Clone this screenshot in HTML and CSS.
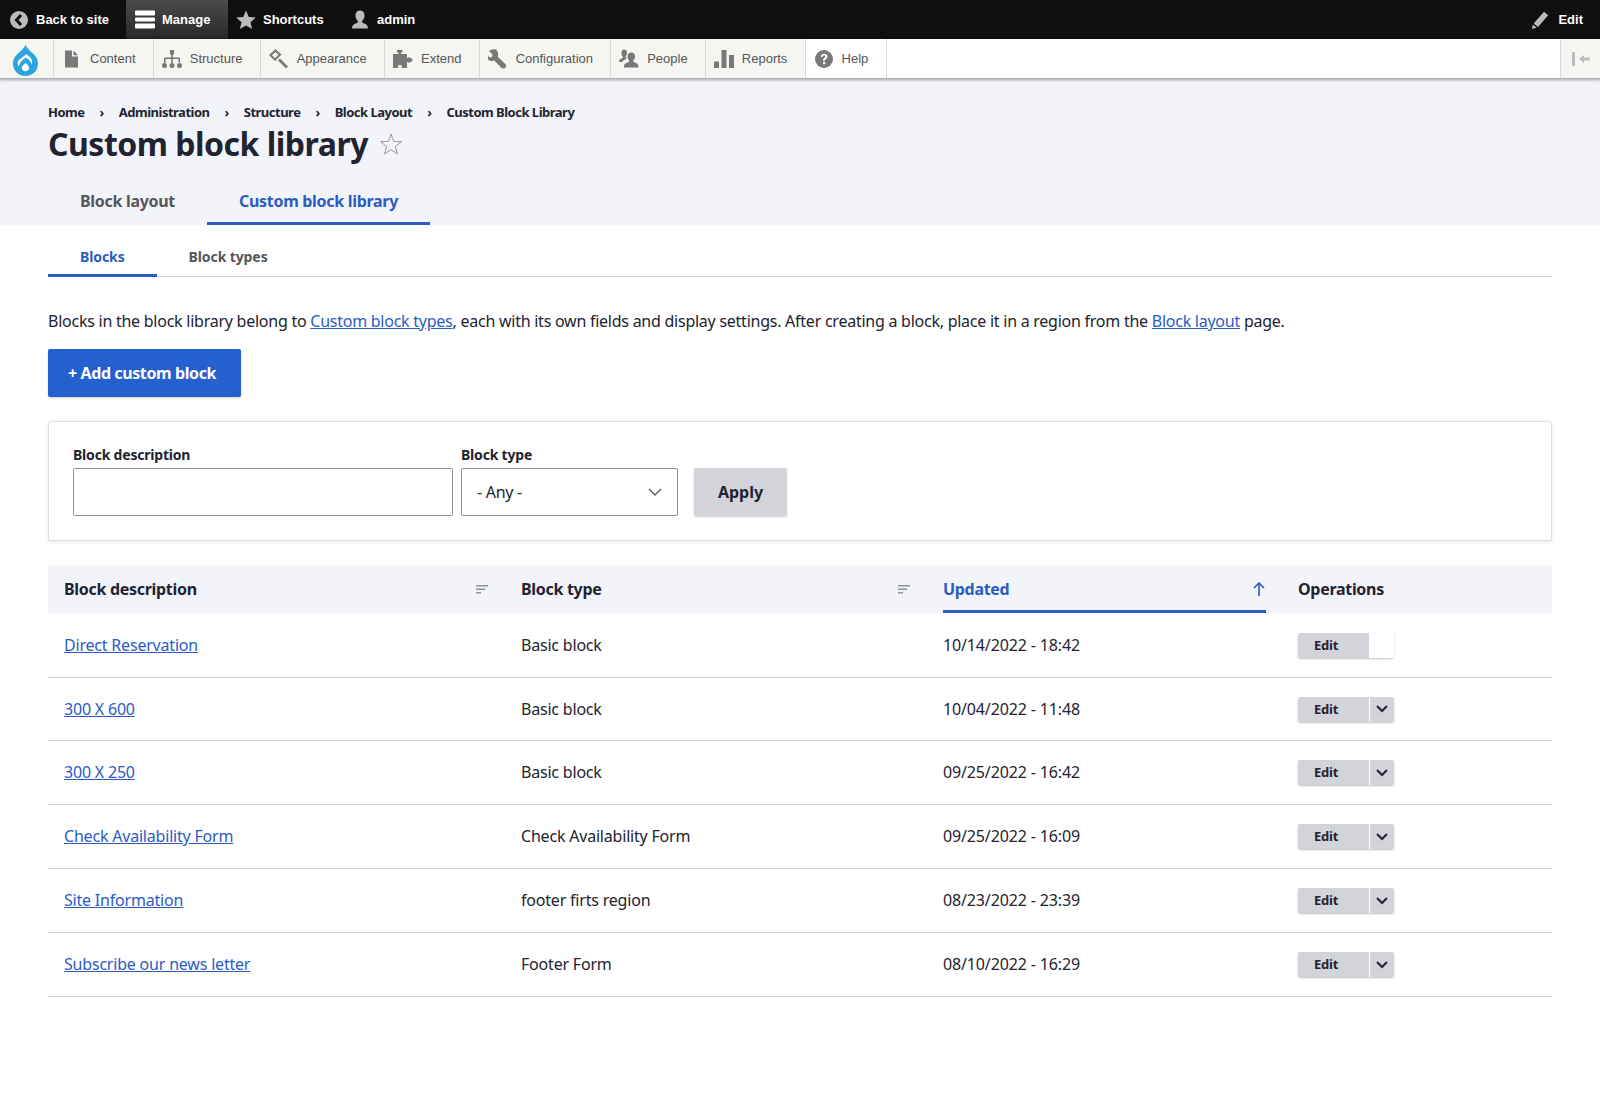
FILE: index.html
```html
<!DOCTYPE html>
<html lang="en">

<head>
    <meta charset="UTF-8">
    <meta name="viewport" content="width=device-width, initial-scale=1.0">
    <title>Custom block library</title>
    <link rel="stylesheet" href="styles.css">
</head>

<body>
    <div class="toolbar-bar">
        <a class="bar-item back">
            <svg width="18" height="18" viewBox="0 0 18 18"><circle cx="9" cy="9" r="9" fill="#bbb"/><path d="M11 4 6.500 9l4.500 5" fill="none" stroke="#0f0f0f" stroke-width="3"/></svg>
            Back to site
        </a>
        <a class="bar-item manage">
            <svg width="20" height="20" viewBox="0 0 20 20"><path d="M0 1.500a1 1 0 0 1 1-1h18a1 1 0 0 1 1 1v3a1 1 0 0 1-1 1H1a1 1 0 0 1-1-1zM0 8.500a1 1 0 0 1 1-1h18a1 1 0 0 1 1 1v2a1 1 0 0 1-1 1H1a1 1 0 0 1-1-1zM0 14.500a1 1 0 0 1 1-1h18a1 1 0 0 1 1 1v3a1 1 0 0 1-1 1H1a1 1 0 0 1-1-1z" fill="#fff"/></svg>
            Manage
        </a>
        <a class="bar-item shortcuts">
            <svg width="20" height="20" viewBox="0 0 20 20"><path d="M10 .5l2.800 6.500 7 .6-5.300 4.600 1.600 6.900-6.100-3.700-6.100 3.700 1.600-6.900L.2 7.600l7-.6z" fill="#bbb"/></svg>
            Shortcuts
        </a>
        <a class="bar-item user">
            <svg width="20" height="20" viewBox="0 0 20 20"><path d="M10 .5c3 0 4.500 2.300 4.500 5 0 2.300-1 4.300-2.300 5.300-.4.400-.4 1.600.4 2 1.500.8 5.400 1.600 5.400 5.700H2c0-4.100 3.900-4.900 5.400-5.700.8-.4.800-1.600.4-2C6.500 9.800 5.500 7.800 5.500 5.500c0-2.700 1.500-5 4.500-5z" fill="#bbb"/></svg>
            admin
        </a>
        <a class="bar-item bar-edit">
            <svg width="18" height="18" viewBox="0 0 18 18"><path d="M13 .8l4.200 3.400L7 16 2.700 12.500zM1.800 13.500l3.900 3.200-4.900 1.200z" fill="#bbb"/></svg>
            Edit
        </a>
    </div>

    <nav class="tray">
        <a class="logo">
            <svg width="25" height="31" viewBox="0 0 25 31"><path d="M12.500 0c1.600 3.800 4.600 5.800 7 8.100 3 2.800 5.500 6 5.500 10.400C25 25.800 19.400 31 12.500 31S0 25.800 0 18.500C0 14.100 2.500 10.900 5.500 8.100 7.900 5.800 10.900 3.800 12.500 0z" fill="#2ba5dd"/><path d="M13.500 9 5.300 15.500c-1 2-.8 4.300.5 6 1-3.800 3.600-7 7.200-9 3 1.800 5 4.200 5.800 7 .9-2.500.2-5.300-1.800-7.200zM12.500 18c2.200 1.600 3.700 3.200 3.700 5.100 0 1.900-1.700 3.100-3.700 3.100s-3.700-1.200-3.700-3.100c0-1.900 1.500-3.500 3.700-5.100z" fill="#fff"/></svg>
        </a>
        <a class="tray-item">
            <svg width="20" height="20" viewBox="-3 -1.500 20 20"><path d="M0 0h7v6h6v11H0zM8.500 0 13 4.800H8.500z" fill="#787878"/></svg>
            Content
        </a>
        <a class="tray-item">
            <svg width="20" height="20" viewBox="0 -1 20 20"><path d="M8 0h4v4.500h-1.200v3H17a1 1 0 0 1 1 1v4h-1.500V9h-5.700v4H9.200V9H3.500v4H2V8.500a1 1 0 0 1 1-1h6.200v-3H8z" fill="#787878"/><circle cx="2.500" cy="15.500" r="2.500" fill="#787878"/><circle cx="10" cy="15.500" r="2.500" fill="#787878"/><circle cx="17.500" cy="15.500" r="2.500" fill="#787878"/></svg>
            Structure
        </a>
        <a class="tray-item">
            <svg width="20" height="20" viewBox="0 0 20 20"><path d="M6.500 0 0 6l6 6 6.500-6.500zM6.500 3 3 6.200l3 3 3.500-3.500z" fill="#787878" fill-rule="evenodd"/><path d="M11 9.500l8 8-2 2-8-8z" fill="#787878"/></svg>
            Appearance
        </a>
        <a class="tray-item">
            <svg width="20" height="20" viewBox="0 -1 20 20"><path d="M0 4h5.500V2.500H4V0h5.500v2.500H8V4h6v4.200c.8-1 3-1.200 3-.2h.500a2 2 0 0 1 0 4H17c0 1-2.200.8-3-.2V18H8.500c1-1 .8-3-1.500-3S4.500 17 5.500 18H0z" fill="#787878"/></svg>
            Extend
        </a>
        <a class="tray-item">
            <svg width="20" height="20" viewBox="0 0 20 20"><path d="M7 .3C5 0 2.500.500 1 2l3.500 3.500L4 8 1.200 8.500-.7 5c-.8 2.500 0 5 1.700 6.300 1.500 1 3.500 1 5-.1l7.300 7.600c1 1 3 1 4-.1s1-2.800 0-3.800L9.800 7.700c.8-2.300.5-4.400-.8-5.900C8.500 1 7.800.6 7 .3z" fill="#787878"/></svg>
            Configuration
        </a>
        <a class="tray-item">
            <svg width="20" height="20" viewBox="0 0 20 20"><path d="M5 .5c2 0 3 1.500 3 3.500 0 1.300-.5 2.500-1.200 3.200-.3.300-.3 1 .2 1.300l1 .5c-1 1.300-2.800 1.700-3.800 2.500-.5.400-.8 1-.9 1.500H0c0-3 2.500-3.500 3.500-4 .5-.3.500-1 .2-1.300C3 7 2.500 5.500 2.500 4 2.500 2 3.300.5 5 .5z" fill="#787878"/><path d="M12.500 3.500c2.500 0 3.500 2 3.500 4 0 1.600-.7 3-1.500 3.800-.3.400-.3 1.300.3 1.600 1.200.6 4.700 1.300 4.700 4.600v1H5v-1c0-3.300 3.500-4 4.700-4.600.6-.3.600-1.200.3-1.600C9.200 10.500 8.500 9.100 8.500 7.500c0-2 1-4 4-4z" fill="#787878"/></svg>
            People
        </a>
        <a class="tray-item">
            <svg width="20" height="20" viewBox="0 -1 20 20"><path d="M0 11.500h5V18H0zM7.500 0h5v18h-5zM15 5h5v13h-5z" fill="#787878"/></svg>
            Reports
        </a>
        <a class="tray-item tray-help">
            <svg width="20" height="20" viewBox="-1 -1 20 20"><circle cx="9" cy="9" r="9" fill="#787878"/><path d="M5.800 6.800C6 4.800 7.300 3.700 9.200 3.700c2 0 3.300 1.200 3.300 2.800 0 2.300-2.500 2.400-2.500 4.300H8c0-3 2.300-3 2.300-4.300 0-.6-.5-1-1.100-1-.8 0-1.200.5-1.300 1.300zM8 12h2.200v2.300H8z" fill="#fff"/></svg>
            Help
        </a>
        <a class="tray-toggle">
            <svg width="18" height="14" viewBox="0 0 18 14"><path d="M0 0h3v14H0zM7 7l5-4v2.500h6v3h-6V11z" fill="#bdbdbd"/></svg>
        </a>
    </nav>

    <header class="page-head">
        <ol class="breadcrumb">
            <li>Home</li>
            <li>Administration</li>
            <li>Structure</li>
            <li>Block Layout</li>
            <li>Custom Block Library</li>
        </ol>
        <div class="title-row">
            <h1>Custom block library</h1>
            <svg class="fav" width="24" height="24" viewBox="0 0 24 24"><path d="M12 2l2.700 7.400 7.800.3-6.200 4.800 2.200 7.500-6.500-4.400-6.500 4.400 2.200-7.500-6.200-4.800 7.800-.3z" fill="none" stroke="#9a9aa2" stroke-width="1"/></svg>
        </div>
        <ul class="primary-tabs">
            <li><a>Block layout</a></li>
            <li class="active"><a>Custom block library</a></li>
        </ul>
    </header>

    <main class="content">
        <ul class="secondary-tabs">
            <li class="active"><a>Blocks</a></li>
            <li><a>Block types</a></li>
        </ul>

        <p class="intro">Blocks in the block library belong to <a href="#">Custom block types</a>, each with its own fields and display settings. After creating a block, place it in a region from the <a href="#">Block layout</a> page.</p>

        <a class="btn-primary">+ Add custom block</a>

        <form class="filters">
            <div class="field field-text">
                <label>Block description</label>
                <input type="text">
            </div>
            <div class="field field-select">
                <label>Block type</label>
                <div class="select">
                    - Any -
                    <svg width="14" height="8" viewBox="0 0 14 8"><path d="M1 1l6 6 6-6" fill="none" stroke="#55565b" stroke-width="1.300"/></svg>
                </div>
            </div>
            <button class="btn-apply" type="button">Apply</button>
        </form>

        <table class="blocks">
            <colgroup>
                <col class="col-desc">
                <col class="col-type">
                <col class="col-updated">
                <col>
            </colgroup>
            <thead>
                <tr>
                    <th><div class="th-in">Block description <svg width="12" height="9" viewBox="0 0 12 9"><path d="M0 0h12v1.500H0zM0 3.500h9V5H0zM0 7h5v1.500H0z" fill="#8e929c"/></svg></div></th>
                    <th><div class="th-in">Block type <svg width="12" height="9" viewBox="0 0 12 9"><path d="M0 0h12v1.500H0zM0 3.500h9V5H0zM0 7h5v1.500H0z" fill="#8e929c"/></svg></div></th>
                    <th class="sorted"><div class="th-in">Updated <svg width="12" height="14" viewBox="0 0 12 14"><path d="M6 14V1.500M1 6l5-5 5 5" fill="none" stroke="#2a5cc4" stroke-width="1.600"/></svg></div></th>
                    <th>Operations</th>
                </tr>
            </thead>
            <tbody>
                <tr>
                    <td><a href="#">Direct Reservation</a></td>
                    <td>Basic block</td>
                    <td class="date">10/14/2022 - 18:42</td>
                    <td><div class="ops"><span class="ops-edit">Edit</span><span class="ops-toggle blank"></span></div></td>
                </tr>
                <tr>
                    <td><a href="#">300 X 600</a></td>
                    <td>Basic block</td>
                    <td class="date">10/04/2022 - 11:48</td>
                    <td><div class="ops"><span class="ops-edit">Edit</span><span class="ops-toggle"><svg width="12" height="8" viewBox="0 0 12 8"><path d="M1 1l5 5 5-5" fill="none" stroke="#1f2036" stroke-width="2"/></svg></span></div></td>
                </tr>
                <tr>
                    <td><a href="#">300 X 250</a></td>
                    <td>Basic block</td>
                    <td class="date">09/25/2022 - 16:42</td>
                    <td><div class="ops"><span class="ops-edit">Edit</span><span class="ops-toggle"><svg width="12" height="8" viewBox="0 0 12 8"><path d="M1 1l5 5 5-5" fill="none" stroke="#1f2036" stroke-width="2"/></svg></span></div></td>
                </tr>
                <tr>
                    <td><a href="#">Check Availability Form</a></td>
                    <td>Check Availability Form</td>
                    <td class="date">09/25/2022 - 16:09</td>
                    <td><div class="ops"><span class="ops-edit">Edit</span><span class="ops-toggle"><svg width="12" height="8" viewBox="0 0 12 8"><path d="M1 1l5 5 5-5" fill="none" stroke="#1f2036" stroke-width="2"/></svg></span></div></td>
                </tr>
                <tr>
                    <td><a href="#">Site Information</a></td>
                    <td>footer firts region</td>
                    <td class="date">08/23/2022 - 23:39</td>
                    <td><div class="ops"><span class="ops-edit">Edit</span><span class="ops-toggle"><svg width="12" height="8" viewBox="0 0 12 8"><path d="M1 1l5 5 5-5" fill="none" stroke="#1f2036" stroke-width="2"/></svg></span></div></td>
                </tr>
                <tr>
                    <td><a href="#">Subscribe our news letter</a></td>
                    <td>Footer Form</td>
                    <td class="date">08/10/2022 - 16:29</td>
                    <td><div class="ops"><span class="ops-edit">Edit</span><span class="ops-toggle"><svg width="12" height="8" viewBox="0 0 12 8"><path d="M1 1l5 5 5-5" fill="none" stroke="#1f2036" stroke-width="2"/></svg></span></div></td>
                </tr>
            </tbody>
        </table>
    </main>
</body>

</html>
```

FILE: styles.css
```css
* {
    box-sizing: border-box;
}

html,
body {
    height: 100%;
}

body {
    margin: 0;
    overflow: hidden;
    font: 16px/24px "Noto Sans", sans-serif;
    color: #222330;
    background-color: #fff;
}

ul,
ol {
    margin: 0;
    padding: 0;
    list-style: none;
}

/* admin toolbar */
.toolbar-bar {
    display: flex;
    height: 39px;
    background-color: #0f0f0f;
    font: bold 13px/39px "Liberation Sans", Arial, sans-serif;
    color: #fff;
}

.bar-item {
    display: flex;
    align-items: center;
    gap: 8px;
}

.back {
    width: 126px;
    padding-left: 10px;
}

.manage {
    width: 102px;
    padding-left: 9px;
    gap: 7px;
    background-image: linear-gradient(rgba(255, 255, 255, 0.25), rgba(255, 255, 255, 0.1));
}

.shortcuts {
    width: 120px;
    padding-left: 8px;
    gap: 7px;
}

.user {
    padding-left: 2px;
    gap: 7px;
}

.bar-edit {
    margin-left: auto;
    padding-right: 17px;
    gap: 9px;
}

/* menu tray */
.tray {
    position: relative;
    display: flex;
    height: 39px;
    background-color: #fff;
    box-shadow: 0 1px 3px 1px rgba(0, 0, 0, 0.33);
    font: 13px/39px "Liberation Sans", Arial, sans-serif;
    color: #565656;
}

.logo {
    display: flex;
    align-items: center;
    width: 54px;
    padding: 3px 0 0 13px;
    background-color: #f5f5f2;
    border-right: 1px solid #d9d9d6;
}

.tray-item {
    display: flex;
    align-items: center;
    gap: 8px;
    padding: 0 17.2px 0 8px;
    background-color: #f5f5f2;
    border-right: 1px solid #d9d9d6;
}

.tray-help {
    background-color: #fff;
}

.tray-toggle {
    display: flex;
    align-items: center;
    justify-content: center;
    margin-left: auto;
    width: 40px;
    background-color: #f5f5f2;
    border-left: 1px solid #d9d9d6;
}

/* page header */
.page-head {
    height: 147px;
    padding: 24px 48px 0;
    background-color: #f3f4f9;
}

.breadcrumb {
    display: flex;
    font-size: 13px;
    font-weight: 700;
    line-height: 20px;
    letter-spacing: -0.5px;
}

.breadcrumb li + li::before {
    content: "\203A";
    padding: 0 15px;
}

.title-row {
    display: flex;
    align-items: center;
    gap: 11px;
    margin-top: 2px;
}

h1 {
    margin: 0;
    font-size: 32px;
    line-height: 40px;
    font-weight: 700;
    letter-spacing: -0.5px;
}

.primary-tabs {
    display: flex;
    margin-top: 17px;
}

.primary-tabs a {
    display: block;
    height: 44px;
    padding: 0 32px;
    line-height: 40px;
    font-weight: 700;
    letter-spacing: -0.3px;
    color: #55565b;
}

.primary-tabs .active a {
    color: #2a5cc4;
    border-bottom: 3px solid #2a5cc4;
}

/* main */
.content {
    padding: 0 48px;
    letter-spacing: -0.2px;
}

.secondary-tabs {
    display: flex;
    height: 52px;
    border-bottom: 1px solid #d3d4d9;
    font-size: 14px;
    font-weight: 700;
    letter-spacing: -0.1px;
    color: #55565b;
}

.secondary-tabs a {
    display: block;
    height: 52px;
    padding: 0 32px;
    line-height: 63px;
}

.secondary-tabs .active a {
    color: #2a5cc4;
    border-bottom: 3px solid #2a5cc4;
}

a[href] {
    color: #2a5cc4;
}

.intro {
    margin: 32px 0 16px;
    letter-spacing: -0.25px;
}

.btn-primary {
    display: inline-block;
    height: 48px;
    padding: 0 25px 0 20px;
    line-height: 48px;
    font-weight: 700;
    letter-spacing: -0.4px;
    color: #fff;
    background-color: #2560cf;
    border-radius: 2px;
    box-shadow: 0 1px 2px rgba(0, 0, 0, 0.2);
}

.filters {
    display: flex;
    align-items: flex-end;
    gap: 8px;
    height: 120px;
    margin-top: 24px;
    padding: 0 24px 24px;
    border: 1px solid #dedfe4;
    border-radius: 2px;
    box-shadow: 0 1px 4px rgba(0, 0, 0, 0.1);
}

.field label {
    display: block;
    margin-bottom: 3px;
    font-size: 14px;
    font-weight: 700;
    line-height: 20px;
    letter-spacing: -0.2px;
}

.field input,
.select {
    display: block;
    height: 48px;
    border: 1px solid #8e929c;
    border-radius: 2px;
    background-color: #fff;
}

.field-text input {
    width: 380px;
}

.select {
    display: flex;
    align-items: center;
    justify-content: space-between;
    width: 217px;
    padding: 0 15px;
    letter-spacing: -0.3px;
}

.btn-apply {
    width: 93px;
    height: 48px;
    margin-left: 8px;
    border: 0;
    border-radius: 2px;
    background-color: #d3d4d9;
    font: 700 16px "Noto Sans", sans-serif;
    color: #222330;
    box-shadow: 0 1px 2px rgba(0, 0, 0, 0.2);
}

/* table */
.blocks {
    width: 100%;
    margin-top: 24px;
    border-collapse: collapse;
    table-layout: fixed;
}

.col-desc {
    width: 457px;
}

.col-type {
    width: 422px;
}

.col-updated {
    width: 355px;
}

.blocks th {
    height: 48px;
    padding: 0 16px;
    background-color: #f3f4f9;
    text-align: left;
    font-weight: 700;
    letter-spacing: -0.3px;
}

.th-in {
    display: flex;
    align-items: center;
    justify-content: space-between;
    height: 48px;
    padding-right: 1px;
}

.blocks .sorted .th-in {
    padding-top: 2px;
    color: #2a5cc4;
    border-bottom: 3px solid #2a5cc4;
}

.blocks td {
    height: 64px;
    padding: 0 16px;
    border-bottom: 1px solid #d3d4d9;
}

.blocks tr:nth-child(2) td {
    height: 63px;
}

.blocks .date {
    letter-spacing: -0.14px;
}

.ops {
    display: flex;
    width: 96px;
    height: 25px;
    margin-top: 1px;
    border-radius: 2px;
    box-shadow: 0 1px 2px rgba(0, 0, 0, 0.25);
    font-size: 13px;
    font-weight: 700;
    line-height: 25px;
    letter-spacing: -0.2px;
}

.ops-edit {
    width: 71px;
    padding-left: 16px;
    background-color: #d3d4d9;
    border-radius: 2px 0 0 2px;
}

.ops-toggle {
    display: flex;
    align-items: center;
    justify-content: center;
    flex: 1;
    background-color: #d3d4d9;
    border-left: 1px solid #fff;
    border-radius: 0 2px 2px 0;
}

.ops-toggle.blank {
    background-color: #fff;
}
```
